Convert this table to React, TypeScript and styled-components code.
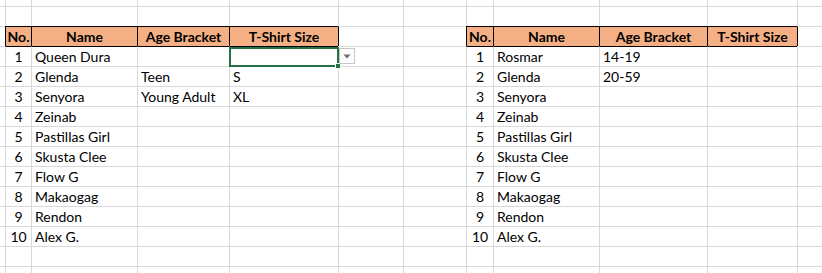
import styled, { createGlobalStyle } from 'styled-components'

const GlobalStyle = createGlobalStyle`
  html, body {
    margin: 0;
    padding: 0;
    background: #fff;
  }
  body {
    font-family: Lato, "Open Sans", sans-serif;
  }
`

const GRID = '#d9d9d9'
const EDGE = '#000'
const HEAD_BG = '#f4b084'
const SELECT = '#217346'

// column widths, left to right, as Excel shows them
const COLS = [5, 26, 106, 92, 109, 65, 63, 27, 106, 108, 90, 40]
const HEADER_ROW = 2

const names1 = ['Queen Dura', 'Glenda', 'Senyora', 'Zeinab', 'Pastillas Girl', 'Skusta Clee', 'Flow G', 'Makaogag', 'Rendon', 'Alex G.']
const names2 = ['Rosmar', 'Glenda', 'Senyora', 'Zeinab', 'Pastillas Girl', 'Skusta Clee', 'Flow G', 'Makaogag', 'Rendon', 'Alex G.']
const age1 = ['', 'Teen', 'Young Adult']
const size1 = ['', 'S', 'XL']
const age2 = ['14-19', '20-59']

const buildRows = () => {
  const rows: string[][] = []
  const empty = () => COLS.map(() => '')
  rows.push(empty())
  rows.push(empty())
  const head = empty()
  head[1] = 'No.'
  head[2] = 'Name'
  head[3] = 'Age Bracket'
  head[4] = 'T-Shirt Size'
  head[7] = 'No.'
  head[8] = 'Name'
  head[9] = 'Age Bracket'
  head[10] = 'T-Shirt Size'
  rows.push(head)
  for (let i = 0; i < 10; i++) {
    const r = empty()
    r[1] = `${i + 1}`
    r[2] = names1[i]
    r[3] = age1[i] || ''
    r[4] = size1[i] || ''
    r[7] = `${i + 1}`
    r[8] = names2[i]
    r[9] = age2[i] || ''
    rows.push(r)
  }
  rows.push(empty())
  rows.push(empty())
  return rows
}

const isHead = (r: number, c: number) =>
  r === HEADER_ROW && ((c >= 1 && c <= 4) || (c >= 7 && c <= 10))

const Sheet = styled.div`
  display: grid;
  grid-template-columns: ${COLS.map(w => `${w}px`).join(' ')};
  grid-template-rows: 6px repeat(14, 20px);
  width: 822px;
  height: 273px;
  overflow: hidden;
  font-size: 14px;
  color: #000;
`

const Cell = styled.div<{ $top?: string; $left?: string; $head?: boolean; $center?: boolean }>`
  box-sizing: border-box;
  display: flex;
  align-items: flex-end;
  justify-content: ${p => (p.$center ? 'center' : 'flex-start')};
  min-width: 0;
  padding: ${p => (p.$center ? '0 0 1px' : '0 3px 1px')};
  border-top: ${p => (p.$top ? `1px solid ${p.$top}` : 'none')};
  border-left: ${p => (p.$left ? `1px solid ${p.$left}` : 'none')};
  background: ${p => (p.$head ? HEAD_BG : '#fff')};
  font-weight: ${p => (p.$head ? 700 : 400)};
  line-height: 17px;
  white-space: nowrap;
`

const ActiveCell = styled(Cell)`
  position: relative;
  z-index: 1;
`

const Selection = styled.div`
  position: absolute;
  left: -1px;
  top: 0;
  width: 110px;
  height: 20px;
  box-sizing: border-box;
  border: 2px solid ${SELECT};
  pointer-events: none;
`

const Handle = styled.div`
  position: absolute;
  right: -4px;
  bottom: -4px;
  width: 6px;
  height: 6px;
  box-sizing: border-box;
  background: ${SELECT};
  border: 1px solid #fff;
`

const DropButton = styled.div`
  position: absolute;
  left: calc(100% + 1px);
  top: 1px;
  width: 16px;
  height: 16px;
  box-sizing: border-box;
  border: 1px solid #c6c6c6;
  background: #fdfdfd;
  display: flex;
  align-items: center;
  justify-content: center;
`

export default function App() {
  const rows = buildRows()
  return (
    <>
      <GlobalStyle />
      <Sheet>
        {rows.map((row, r) =>
          row.map((text, c) => {
            const top = r === 0 ? undefined : isHead(r, c) || isHead(r - 1, c) ? EDGE : GRID
            const left = c === 0 ? undefined : isHead(r, c) || isHead(r, c - 1) ? EDGE : GRID
            const center = isHead(r, c) || c === 1 || c === 7
            if (r === 3 && c === 4) {
              return (
                <ActiveCell key={`${r}-${c}`} $top={top} $left={left}>
                  {text}
                  <Selection>
                    <Handle />
                  </Selection>
                  <DropButton>
                    <svg width="8" height="5" viewBox="0 0 8 5">
                      <path d="M0.5 0.5 L7.5 0.5 L4 4.5 Z" fill="#6d6d6d" />
                    </svg>
                  </DropButton>
                </ActiveCell>
              )
            }
            return (
              <Cell key={`${r}-${c}`} $top={top} $left={left} $head={isHead(r, c)} $center={center}>
                {text}
              </Cell>
            )
          })
        )}
      </Sheet>
    </>
  )
}
